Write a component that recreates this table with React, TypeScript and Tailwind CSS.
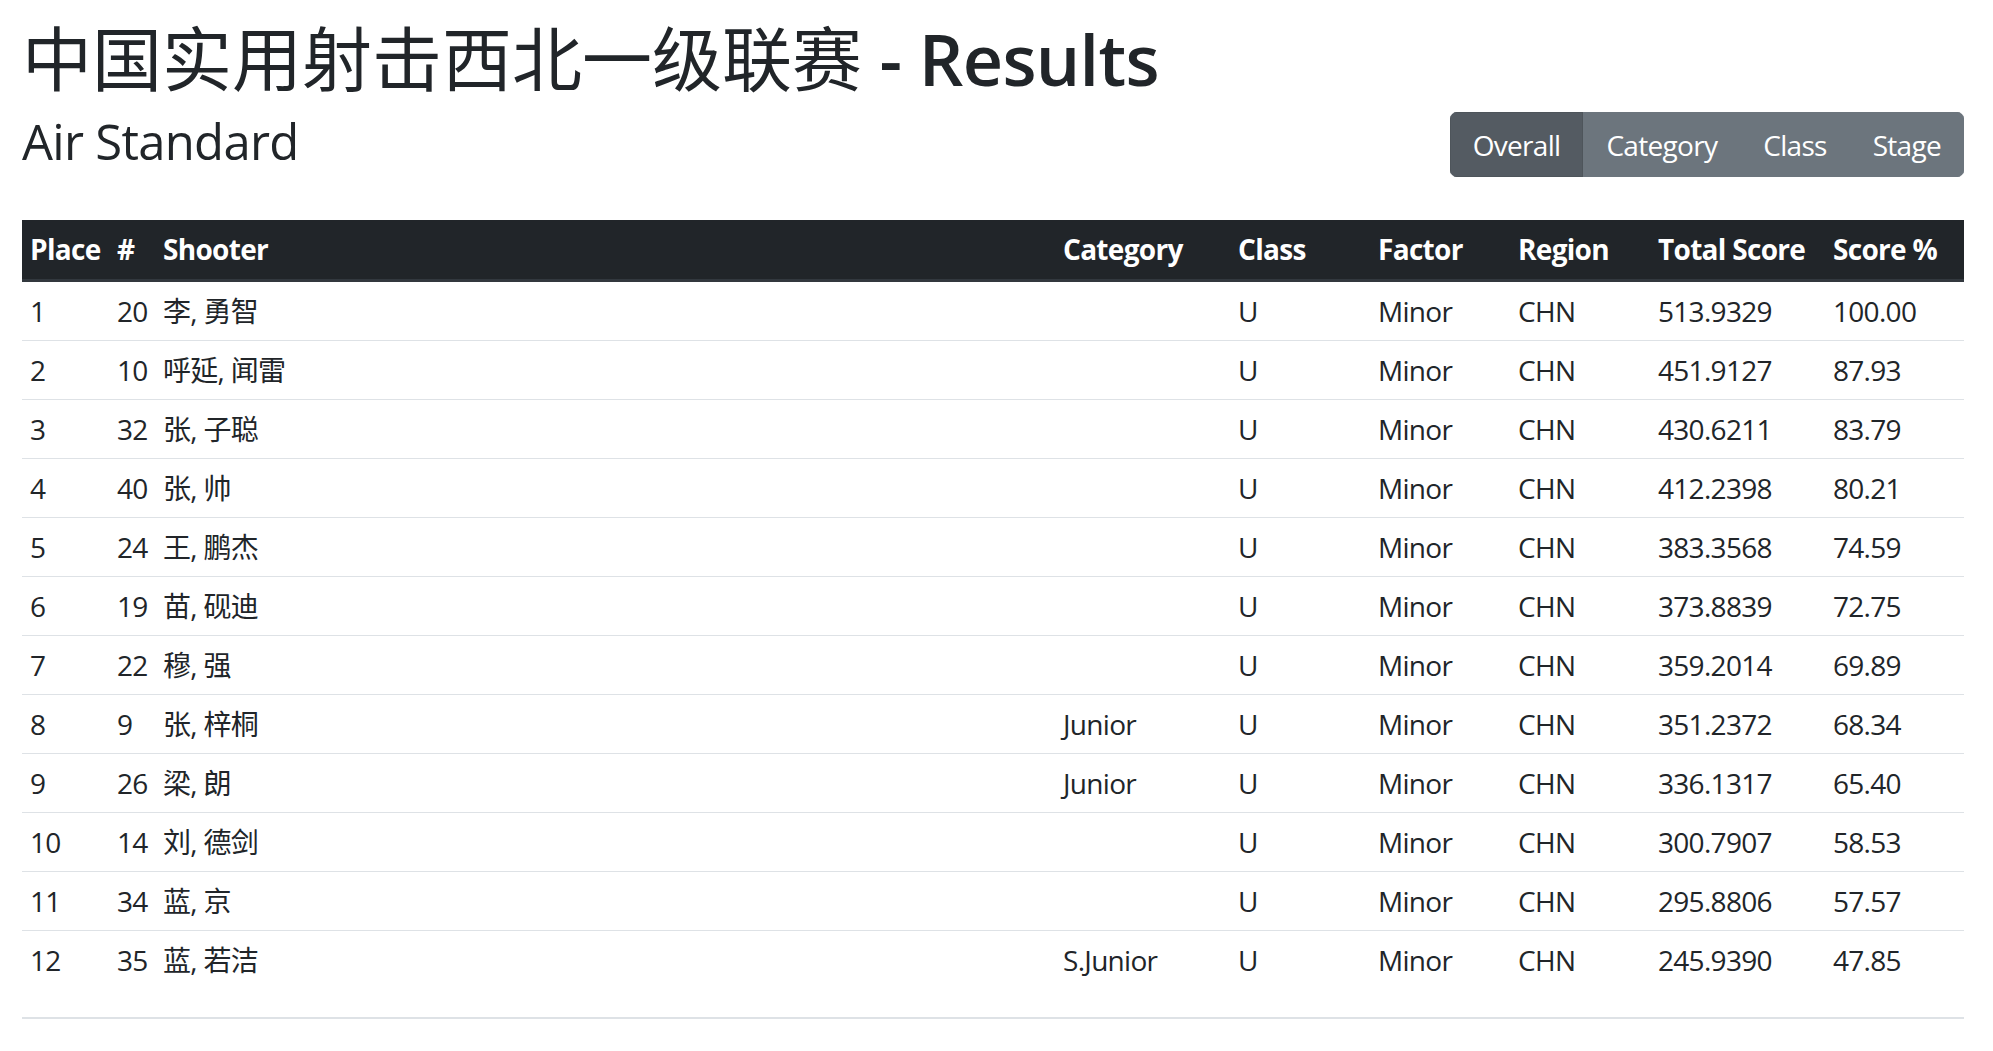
type Row = {
  place: number
  no: number
  name: string
  category: string
  total: string
  pct: string
}

const rows: Row[] = [
  { place: 1, no: 20, name: '李, 勇智', category: '', total: '513.9329', pct: '100.00' },
  { place: 2, no: 10, name: '呼延, 闻雷', category: '', total: '451.9127', pct: '87.93' },
  { place: 3, no: 32, name: '张, 子聪', category: '', total: '430.6211', pct: '83.79' },
  { place: 4, no: 40, name: '张, 帅', category: '', total: '412.2398', pct: '80.21' },
  { place: 5, no: 24, name: '王, 鹏杰', category: '', total: '383.3568', pct: '74.59' },
  { place: 6, no: 19, name: '苗, 砚迪', category: '', total: '373.8839', pct: '72.75' },
  { place: 7, no: 22, name: '穆, 强', category: '', total: '359.2014', pct: '69.89' },
  { place: 8, no: 9, name: '张, 梓桐', category: 'Junior', total: '351.2372', pct: '68.34' },
  { place: 9, no: 26, name: '梁, 朗', category: 'Junior', total: '336.1317', pct: '65.40' },
  { place: 10, no: 14, name: '刘, 德剑', category: '', total: '300.7907', pct: '58.53' },
  { place: 11, no: 34, name: '蓝, 京', category: '', total: '295.8806', pct: '57.57' },
  { place: 12, no: 35, name: '蓝, 若洁', category: 'S.Junior', total: '245.9390', pct: '47.85' },
]

const headers = ['Place', '#', 'Shooter', 'Category', 'Class', 'Factor', 'Region', 'Total Score', 'Score %']

const tabs = ['Overall', 'Category', 'Class', 'Stage']

export default function App() {
  return (
    <div className="min-h-screen bg-white pl-[22px] pr-[29px] pt-[17px] text-[#212529] font-['Segoe_UI','Open_Sans','Noto_Sans_CJK_SC',sans-serif] text-[28px] leading-[42px] tracking-[-0.025em]">
      <h1 className="m-0 text-[70px] leading-[84px] font-semibold">
        <span className="font-normal tracking-normal">中国实用射击西北一级联赛</span> - Results
      </h1>

      <div className="mt-[11px] flex items-start justify-between">
        <h3 className="m-0 text-[49px] leading-[59px] font-medium">Air Standard</h3>
        <div className="flex rounded-[7px] overflow-hidden">
          {tabs.map((t, i) => (
            <button
              key={t}
              className={
                i === 0
                  ? 'h-[65px] px-[22px] border border-[#4e555b] bg-[#545b62] text-white'
                  : 'h-[65px] px-[22px] border border-[#6c757d] bg-[#6c757d] text-white'
              }
            >
              {t}
            </button>
          ))}
        </div>
      </div>

      <table className="mt-[43px] w-full table-fixed border-collapse">
        <colgroup>
          <col className="w-[87px]" />
          <col className="w-[46px]" />
          <col />
          <col className="w-[175px]" />
          <col className="w-[140px]" />
          <col className="w-[140px]" />
          <col className="w-[140px]" />
          <col className="w-[175px]" />
          <col className="w-[139px]" />
        </colgroup>
        <thead>
          <tr className="bg-[#212529] text-white">
            {headers.map((h) => (
              <th key={h} className="h-[60px] px-[8px] py-0 text-left font-bold whitespace-nowrap border-b-[3px] border-[#32383e]">
                {h}
              </th>
            ))}
          </tr>
        </thead>
        <tbody>
          {rows.map((r, i) => {
            const td = i === 0 ? 'h-[60px] px-[8px] py-0 whitespace-nowrap' : 'h-[59px] px-[8px] py-0 whitespace-nowrap border-t border-[#dee2e6]'
            return (
              <tr key={r.place}>
                <td className={td}>{r.place}</td>
                <td className={td}>{r.no}</td>
                <td className={td}>{r.name}</td>
                <td className={td}>{r.category}</td>
                <td className={td}>U</td>
                <td className={td}>Minor</td>
                <td className={td}>CHN</td>
                <td className={td}>{r.total}</td>
                <td className={td}>{r.pct}</td>
              </tr>
            )
          })}
        </tbody>
        <tfoot>
          <tr>
            <td colSpan={9} className="h-[29px] p-0 border-b-2 border-[#dee2e6]" />
          </tr>
        </tfoot>
      </table>
    </div>
  )
}
